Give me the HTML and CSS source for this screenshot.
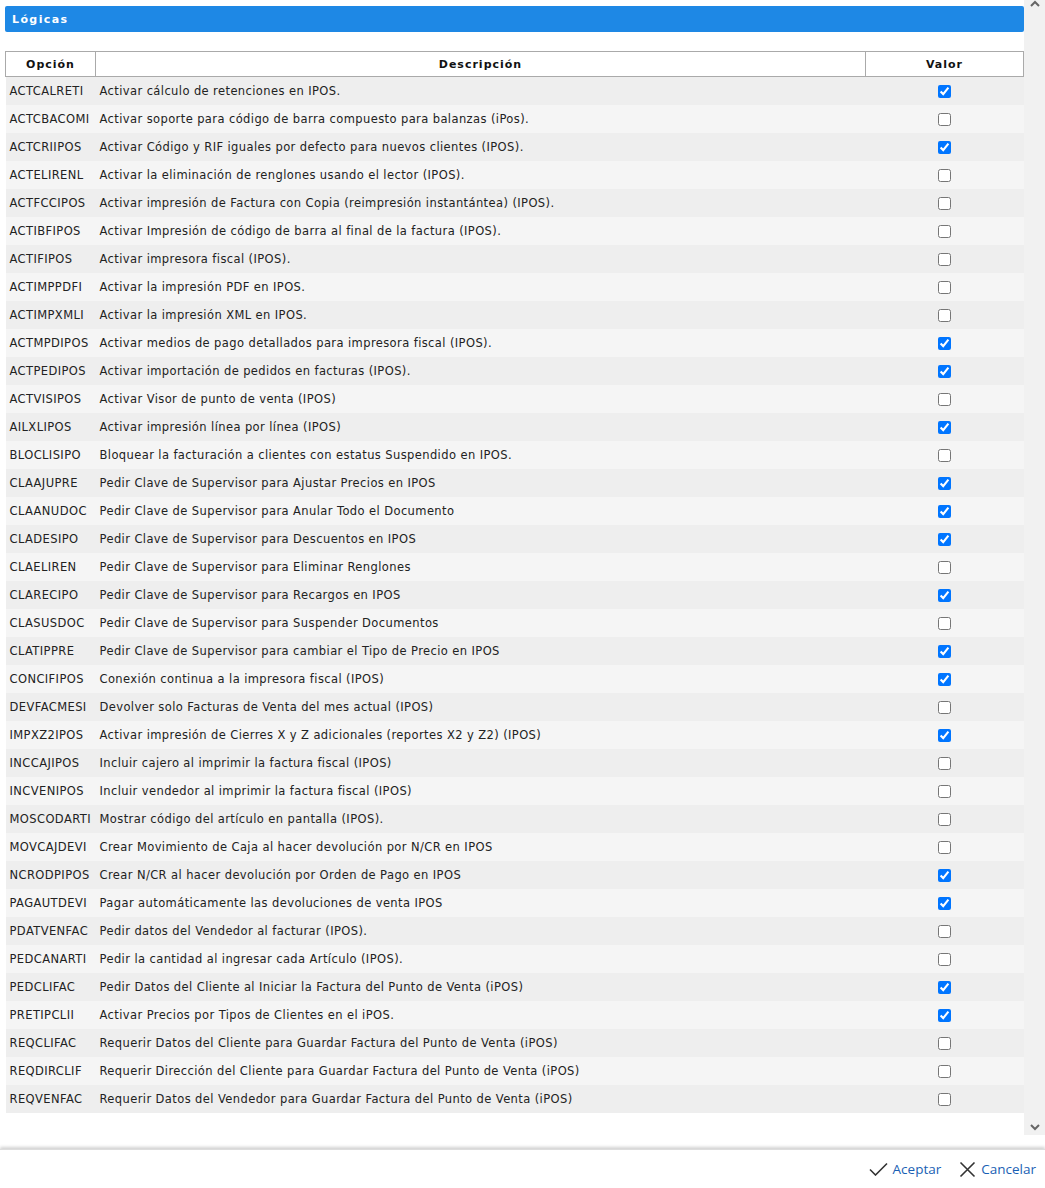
FILE: index.html
```html
<!DOCTYPE html>
<html lang="es">
<head>
  <meta charset="UTF-8"/>
  <title>Lógicas</title>
  <link rel="stylesheet" href="styles.css">
</head>
<body>
  <div class="dialog">
    <div class="dialog-body">
      <div class="content">
        <div class="panel-title">Lógicas</div>
        <table class="grid">
          <colgroup>
            <col class="col-code"/>
            <col class="col-desc"/>
            <col class="col-val"/>
          </colgroup>
          <thead>
            <tr><th>Opción</th><th>Descripción</th><th>Valor</th></tr>
          </thead>
          <tbody>
            <tr><td>ACTCALRETI</td><td>Activar cálculo de retenciones en IPOS.</td><td class="val"><input type="checkbox" checked/></td></tr>
            <tr><td>ACTCBACOMI</td><td>Activar soporte para código de barra compuesto para balanzas (iPos).</td><td class="val"><input type="checkbox"/></td></tr>
            <tr><td>ACTCRIIPOS</td><td>Activar Código y RIF iguales por defecto para nuevos clientes (IPOS).</td><td class="val"><input type="checkbox" checked/></td></tr>
            <tr><td>ACTELIRENL</td><td>Activar la eliminación de renglones usando el lector (IPOS).</td><td class="val"><input type="checkbox"/></td></tr>
            <tr><td>ACTFCCIPOS</td><td>Activar impresión de Factura con Copia (reimpresión instantántea) (IPOS).</td><td class="val"><input type="checkbox"/></td></tr>
            <tr><td>ACTIBFIPOS</td><td>Activar Impresión de código de barra al final de la factura (IPOS).</td><td class="val"><input type="checkbox"/></td></tr>
            <tr><td>ACTIFIPOS</td><td>Activar impresora fiscal (IPOS).</td><td class="val"><input type="checkbox"/></td></tr>
            <tr><td>ACTIMPPDFI</td><td>Activar la impresión PDF en IPOS.</td><td class="val"><input type="checkbox"/></td></tr>
            <tr><td>ACTIMPXMLI</td><td>Activar la impresión XML en IPOS.</td><td class="val"><input type="checkbox"/></td></tr>
            <tr><td>ACTMPDIPOS</td><td>Activar medios de pago detallados para impresora fiscal (IPOS).</td><td class="val"><input type="checkbox" checked/></td></tr>
            <tr><td>ACTPEDIPOS</td><td>Activar importación de pedidos en facturas (IPOS).</td><td class="val"><input type="checkbox" checked/></td></tr>
            <tr><td>ACTVISIPOS</td><td>Activar Visor de punto de venta (IPOS)</td><td class="val"><input type="checkbox"/></td></tr>
            <tr><td>AILXLIPOS</td><td>Activar impresión línea por línea (IPOS)</td><td class="val"><input type="checkbox" checked/></td></tr>
            <tr><td>BLOCLISIPO</td><td>Bloquear la facturación a clientes con estatus Suspendido en IPOS.</td><td class="val"><input type="checkbox"/></td></tr>
            <tr><td>CLAAJUPRE</td><td>Pedir Clave de Supervisor para Ajustar Precios en IPOS</td><td class="val"><input type="checkbox" checked/></td></tr>
            <tr><td>CLAANUDOC</td><td>Pedir Clave de Supervisor para Anular Todo el Documento</td><td class="val"><input type="checkbox" checked/></td></tr>
            <tr><td>CLADESIPO</td><td>Pedir Clave de Supervisor para Descuentos en IPOS</td><td class="val"><input type="checkbox" checked/></td></tr>
            <tr><td>CLAELIREN</td><td>Pedir Clave de Supervisor para Eliminar Renglones</td><td class="val"><input type="checkbox"/></td></tr>
            <tr><td>CLARECIPO</td><td>Pedir Clave de Supervisor para Recargos en IPOS</td><td class="val"><input type="checkbox" checked/></td></tr>
            <tr><td>CLASUSDOC</td><td>Pedir Clave de Supervisor para Suspender Documentos</td><td class="val"><input type="checkbox"/></td></tr>
            <tr><td>CLATIPPRE</td><td>Pedir Clave de Supervisor para cambiar el Tipo de Precio en IPOS</td><td class="val"><input type="checkbox" checked/></td></tr>
            <tr><td>CONCIFIPOS</td><td>Conexión continua a la impresora fiscal (IPOS)</td><td class="val"><input type="checkbox" checked/></td></tr>
            <tr><td>DEVFACMESI</td><td>Devolver solo Facturas de Venta del mes actual (IPOS)</td><td class="val"><input type="checkbox"/></td></tr>
            <tr><td>IMPXZ2IPOS</td><td>Activar impresión de Cierres X y Z adicionales (reportes X2 y Z2) (IPOS)</td><td class="val"><input type="checkbox" checked/></td></tr>
            <tr><td>INCCAJIPOS</td><td>Incluir cajero al imprimir la factura fiscal (IPOS)</td><td class="val"><input type="checkbox"/></td></tr>
            <tr><td>INCVENIPOS</td><td>Incluir vendedor al imprimir la factura fiscal (IPOS)</td><td class="val"><input type="checkbox"/></td></tr>
            <tr><td>MOSCODARTI</td><td>Mostrar código del artículo en pantalla (IPOS).</td><td class="val"><input type="checkbox"/></td></tr>
            <tr><td>MOVCAJDEVI</td><td>Crear Movimiento de Caja al hacer devolución por N/CR en IPOS</td><td class="val"><input type="checkbox"/></td></tr>
            <tr><td>NCRODPIPOS</td><td>Crear N/CR al hacer devolución por Orden de Pago en IPOS</td><td class="val"><input type="checkbox" checked/></td></tr>
            <tr><td>PAGAUTDEVI</td><td>Pagar automáticamente las devoluciones de venta IPOS</td><td class="val"><input type="checkbox" checked/></td></tr>
            <tr><td>PDATVENFAC</td><td>Pedir datos del Vendedor al facturar (IPOS).</td><td class="val"><input type="checkbox"/></td></tr>
            <tr><td>PEDCANARTI</td><td>Pedir la cantidad al ingresar cada Artículo (IPOS).</td><td class="val"><input type="checkbox"/></td></tr>
            <tr><td>PEDCLIFAC</td><td>Pedir Datos del Cliente al Iniciar la Factura del Punto de Venta (iPOS)</td><td class="val"><input type="checkbox" checked/></td></tr>
            <tr><td>PRETIPCLII</td><td>Activar Precios por Tipos de Clientes en el iPOS.</td><td class="val"><input type="checkbox" checked/></td></tr>
            <tr><td>REQCLIFAC</td><td>Requerir Datos del Cliente para Guardar Factura del Punto de Venta (iPOS)</td><td class="val"><input type="checkbox"/></td></tr>
            <tr><td>REQDIRCLIF</td><td>Requerir Dirección del Cliente para Guardar Factura del Punto de Venta (iPOS)</td><td class="val"><input type="checkbox"/></td></tr>
            <tr><td>REQVENFAC</td><td>Requerir Datos del Vendedor para Guardar Factura del Punto de Venta (iPOS)</td><td class="val"><input type="checkbox"/></td></tr>
          </tbody>
        </table>
      </div>
      <!-- scrollbar -->
      <div class="scrollbar">
        <svg width="10" height="7" viewBox="0 0 10 7"><path d="M1 6 L5 2 L9 6" fill="none" stroke="#666" stroke-width="2"/></svg>
        <svg width="10" height="7" viewBox="0 0 10 7"><path d="M1 1 L5 5 L9 1" fill="none" stroke="#666" stroke-width="2"/></svg>
      </div>
    </div>
    <!-- Footer -->
    <div class="dialog-footer">
      <button class="action">
        <svg width="19" height="14" viewBox="0 0 19 14"><path d="M1 7.5 L6.5 13 L18 1.5" fill="none" stroke="#333" stroke-width="1.6"/></svg>
        Aceptar
      </button>
      <button class="action">
        <svg width="17" height="17" viewBox="0 0 17 17"><path d="M1.5 1.5 L15.5 15.5 M15.5 1.5 L1.5 15.5" fill="none" stroke="#333" stroke-width="1.6"/></svg>
        Cancelar
      </button>
    </div>
  </div>
</body>
</html>
```

FILE: styles.css
```css
*, *::before, *::after { box-sizing: border-box; }

body {
  margin: 0;
  background: #fff;
  color: #222;
  font-family: "DejaVu Sans", Verdana, sans-serif;
  font-size: 11.5px;
  letter-spacing: .4px;
}

.dialog {
  display: flex;
  flex-direction: column;
  height: 1188px;
}

.dialog-body {
  display: flex;
  height: 1135px;
}

.content {
  flex: 1;
  padding: 6px 0 0 5px;
}

/* Panel title */
.panel-title {
  height: 26px;
  line-height: 27px;
  padding-left: 7px;
  background: #1e88e5;
  color: #fff;
  font-size: 11px;
  font-weight: bold;
  letter-spacing: 1.4px;
  border-radius: 2px;
  margin-bottom: 19px;
}

/* Grid */
.grid {
  width: 1018px;
  table-layout: fixed;
  border-collapse: collapse;
}
.col-code { width: 90px; }
.col-desc { width: 770px; }
.col-val  { width: 158px; }

.grid th {
  height: 25px;
  border: 1px solid #aaa;
  font-size: 11px;
  font-weight: bold;
  letter-spacing: 1px;
  text-align: center;
  color: #111;
  padding: 0;
}
.grid td {
  height: 28px;
  padding: 1px 4px 0;
  white-space: nowrap;
  overflow: hidden;
}
.grid tbody tr:nth-child(odd)  { background: #eeeeee; }
.grid tbody tr:nth-child(even) { background: #f5f5f5; }
.grid td.val { text-align: center; padding: 0; }
.grid td.val input {
  margin: 0;
  width: 13px; height: 13px;
  vertical-align: middle;
}

/* Fake scrollbar */
.scrollbar {
  width: 22px;
  background: #f1f1f1;
  display: flex;
  flex-direction: column;
  justify-content: space-between;
  align-items: center;
  padding: 0 0 4px;
}

/* Footer */
.dialog-footer {
  margin-top: 14px;
  flex: 1;
  display: flex;
  justify-content: flex-end;
  align-items: center;
  gap: 18px;
  padding: 0 9px 0 0;
  box-shadow: 0 -2px 3px rgba(0,0,0,.18);
  border-top: 1px solid #ddd;
  letter-spacing: 0;
}
.action {
  display: flex;
  align-items: center;
  gap: 5px;
  background: none;
  border: none;
  padding: 0;
  font-family: "Open Sans", sans-serif;
  font-size: 13.5px;
  color: #1a5fb4;
  cursor: pointer;
}
```
